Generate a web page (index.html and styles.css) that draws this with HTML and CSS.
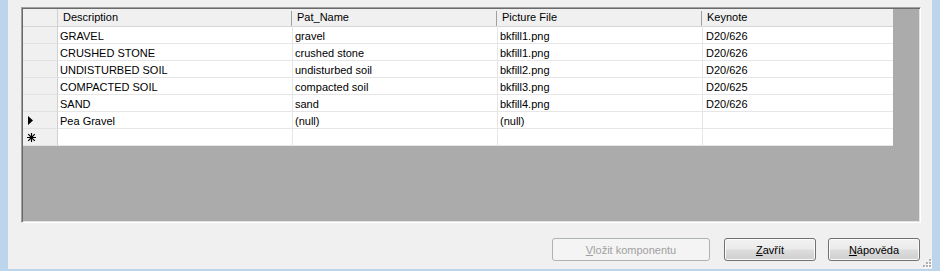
FILE: index.html
```html
<!DOCTYPE html>
<html>
    <head>
        <title>Komponenty</title>
        <link rel="stylesheet" href="styles.css">
    </head>
    <body>
        <div class="window">
            <div class="grid">
                <div class="row head">
                    <div class="rh"></div>
                    <div class="hc c1">Description</div>
                    <div class="hc c2">Pat_Name</div>
                    <div class="hc c3">Picture File</div>
                    <div class="hc c4">Keynote</div>
                </div>
                <div class="row">
                    <div class="rh"></div>
                    <div class="cell c1">GRAVEL</div>
                    <div class="cell c2">gravel</div>
                    <div class="cell c3">bkfill1.png</div>
                    <div class="cell c4">D20/626</div>
                </div>
                <div class="row">
                    <div class="rh"></div>
                    <div class="cell c1">CRUSHED STONE</div>
                    <div class="cell c2">crushed stone</div>
                    <div class="cell c3">bkfill1.png</div>
                    <div class="cell c4">D20/626</div>
                </div>
                <div class="row">
                    <div class="rh"></div>
                    <div class="cell c1">UNDISTURBED SOIL</div>
                    <div class="cell c2">undisturbed soil</div>
                    <div class="cell c3">bkfill2.png</div>
                    <div class="cell c4">D20/626</div>
                </div>
                <div class="row">
                    <div class="rh"></div>
                    <div class="cell c1">COMPACTED SOIL</div>
                    <div class="cell c2">compacted soil</div>
                    <div class="cell c3">bkfill3.png</div>
                    <div class="cell c4">D20/625</div>
                </div>
                <div class="row">
                    <div class="rh"></div>
                    <div class="cell c1">SAND</div>
                    <div class="cell c2">sand</div>
                    <div class="cell c3">bkfill4.png</div>
                    <div class="cell c4">D20/626</div>
                </div>
                <div class="row">
                    <div class="rh">
                        <svg width="5" height="9" viewBox="0 0 5 9"><polygon points="0,0 5,4.5 0,9" fill="#000"/></svg>
                    </div>
                    <div class="cell c1">Pea Gravel</div>
                    <div class="cell c2">(null)</div>
                    <div class="cell c3">(null)</div>
                    <div class="cell c4"></div>
                </div>
                <div class="row">
                    <div class="rh">
                        <svg width="9" height="9" viewBox="0 0 9 9">
                            <path d="M4.5 0V9M0 4.5H9M1.2 1.2L7.8 7.8M7.8 1.2L1.2 7.8" stroke="#000" stroke-width="1.2"/>
                        </svg>
                    </div>
                    <div class="cell c1"></div>
                    <div class="cell c2"></div>
                    <div class="cell c3"></div>
                    <div class="cell c4"></div>
                </div>
            </div>

            <div class="buttons">
                <button class="btn wide" disabled><u>V</u>ložit komponentu</button>
                <button class="btn close"><u>Z</u>avřít</button>
                <button class="btn help"><u>N</u>ápověda</button>
            </div>

            <svg class="grip" width="12" height="12" viewBox="0 0 12 12">
                <g fill="#fff">
                    <rect x="10" y="3" width="2" height="2"/>
                    <rect x="7" y="6" width="2" height="2"/>
                    <rect x="10" y="6" width="2" height="2"/>
                    <rect x="4" y="9" width="2" height="2"/>
                    <rect x="7" y="9" width="2" height="2"/>
                    <rect x="10" y="9" width="2" height="2"/>
                </g>
                <g fill="#b0b0b0">
                    <rect x="9" y="2" width="2" height="2"/>
                    <rect x="6" y="5" width="2" height="2"/>
                    <rect x="9" y="5" width="2" height="2"/>
                    <rect x="3" y="8" width="2" height="2"/>
                    <rect x="6" y="8" width="2" height="2"/>
                    <rect x="9" y="8" width="2" height="2"/>
                </g>
            </svg>
        </div>
    </body>
</html>
```

FILE: styles.css
```css
body {
    margin: 0;
    background-color: #f0f0f0;
    font-family: "Liberation Sans", Arial, sans-serif;
    font-size: 11px;
    color: #000;
}
.window {
    position: relative;
    height: 271px;
    box-sizing: border-box;
    border-left: 8px solid #bcd4ec;
    border-right: 8px solid #bcd4ec;
    border-bottom: 2px solid #bcd4ec;
    padding: 7px 11px 0 13px;
}
.grid {
    height: 216px;
    box-sizing: border-box;
    background-color: #ababab;
    border: 1px solid;
    border-color: #a0a0a0 #ffffff #ffffff #a0a0a0;
    padding: 1px;
    box-shadow: inset 1px 1px #696969, inset -1px -1px #e3e3e3;
}
.row {
    display: flex;
    height: 17px;
}
.row.head {
    height: 18px;
}
.rh {
    width: 35px;
    box-sizing: border-box;
    background-color: #f0f0f0;
    border-right: 1px solid #d0d0d0;
    border-bottom: 1px solid #e2e2e2;
    display: flex;
    align-items: center;
    padding-left: 5px;
}
.row:nth-child(8) .rh {
    padding-left: 4px;
}
.head .rh {
    border-bottom: 1px solid #d5d5d5;
}
.hc, .cell {
    box-sizing: border-box;
    white-space: nowrap;
    overflow: hidden;
}
.hc {
    background-color: #f0f0f0;
    background-image: linear-gradient(#a0a0a0, #a0a0a0);
    background-repeat: no-repeat;
    background-position: right 0 top 2px;
    background-size: 1px 15px;
    border-bottom: 1px solid #d5d5d5;
    border-right: 1px solid #f0f0f0;
    padding-left: 4px;
    line-height: 17px;
}
.hc.c1 {
    padding-left: 5px;
}
.hc.c4 {
    background-image: none;
    border-right: 0;
}
.cell {
    background-color: #fff;
    border-right: 1px solid #e6e6e6;
    border-bottom: 1px solid #e6e6e6;
    padding-left: 2px;
    line-height: 19px;
}
.cell.c4 {
    padding-left: 3px;
    border-right: 0;
}
.c1 {
    width: 235px;
}
.c2 {
    width: 205px;
}
.c3 {
    width: 205px;
}
.c4 {
    width: 190px;
}
.buttons {
    display: flex;
    justify-content: flex-end;
    margin-top: 15px;
    padding-right: 1px;
}
.btn {
    height: 23px;
    font-family: "Liberation Sans", Arial, sans-serif;
    font-size: 11px;
    color: #000;
    border: 1px solid #707070;
    border-radius: 3px;
    background: linear-gradient(#f2f2f2 0%, #ebebeb 48%, #dddddd 52%, #cfcfcf 100%);
    box-shadow: inset 0 0 0 1px #fbfbfb;
    padding: 0;
}
.btn u {
    text-decoration-thickness: 1px;
}
.btn.wide {
    width: 158px;
    color: #a0a0a0;
    border-color: #adb2b5;
    background: #f4f4f4;
    box-shadow: none;
}
.btn.close {
    width: 92px;
    margin-left: 14px;
}
.btn.help {
    width: 92px;
    margin-left: 12px;
}
.grip {
    position: absolute;
    right: 0;
    bottom: 0;
}
```
